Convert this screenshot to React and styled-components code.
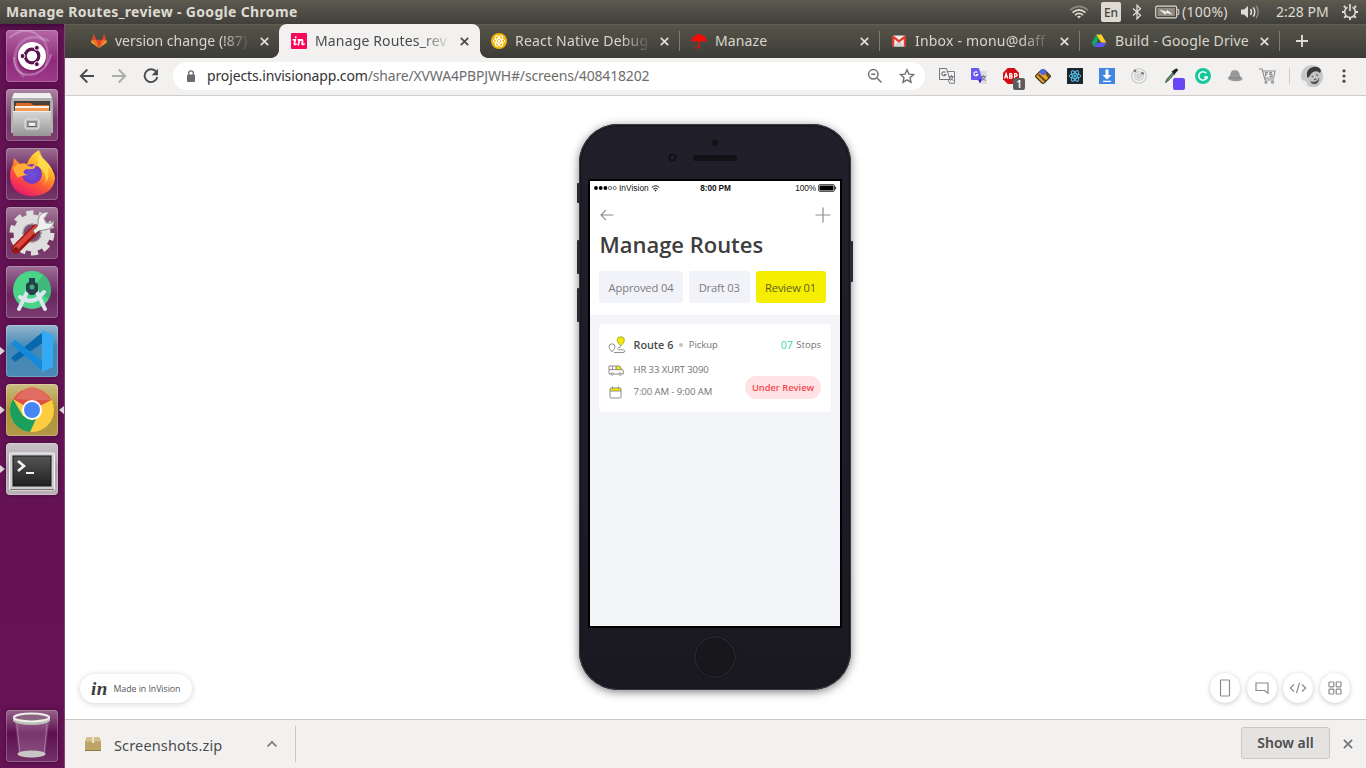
import React from 'react';
import styled, { createGlobalStyle } from 'styled-components';

const GlobalStyle = createGlobalStyle`
  * { box-sizing: border-box; }
  html, body, #root { margin: 0; width: 1366px; height: 768px; overflow: hidden; }
  body { font-family: "Noto Sans", "Open Sans", sans-serif; background: #fff; }
  svg { display: block; flex: none; }
`;

const Desktop = styled.div`
  display: flex;
  flex-direction: column;
  width: 1366px;
  height: 768px;
`;

const Label = styled.span`
  flex: none;
  width: ${p => (p.$w ? `${p.$w}px` : 'auto')};
  font-size: ${p => p.$size || 14}px;
  font-weight: ${p => p.$weight || 400};
  letter-spacing: ${p => p.$ls || 0}px;
  color: ${p => p.$color || 'inherit'};
  white-space: nowrap;
`;

/* ---------- system panel ---------- */

const Panel = styled.header`
  display: flex;
  align-items: center;
  height: 24px;
  padding: 0 8px 0 6px;
  background: linear-gradient(#5e5b4d 0, #5a574e 2px, #403f3a 24px);
  color: #dfdbd2;
  line-height: 24px;
`;
const Indicators = styled.div`
  display: flex;
  align-items: center;
  height: 24px;
  margin-left: auto;
`;
const Slot = styled.div`
  display: flex;
  align-items: center;
  width: ${p => p.$w}px;
  height: 24px;
`;
const LangBox = styled.div`
  width: 20px;
  height: 20px;
  border-radius: 2px;
  background: #dfdbd2;
  color: #45443f;
  font-size: 12px;
  font-weight: 500;
  line-height: 21px;
  text-align: center;
`;

/* ---------- launcher ---------- */

const Body = styled.div`
  display: flex;
  flex: 1;
  min-height: 0;
`;
const Launcher = styled.nav`
  display: flex;
  flex-direction: column;
  flex: none;
  gap: 7px;
  width: 65px;
  padding: 6px 0;
  background: linear-gradient(#43093a 0, #641254 6px, #651355 100%);
  border-right: 1px solid #824474;
`;
const LauncherRow = styled.div`
  display: grid;
  grid-template-columns: 6px 52px 6px;
  align-items: center;
  height: 52px;
  margin-top: ${p => (p.$last ? 'auto' : 0)};
`;
const Tile = styled.div`
  width: 52px;
  height: 52px;
  border-radius: 4px;
  overflow: hidden;
  background: ${p => p.$bg};
  box-shadow: inset 0 0 0 1px rgba(255, 255, 255, 0.22), 0 0 4px rgba(30, 0, 25, 0.5);
`;
const RunMark = styled.span`
  width: 0;
  height: 0;
  border-top: 4px solid transparent;
  border-bottom: 4px solid transparent;
  border-left: ${p => (p.$right ? '0' : '5px solid #dcd5d9')};
  border-right: ${p => (p.$right ? '5px solid #dcd5d9' : '0')};
  visibility: ${p => (p.$on ? 'visible' : 'hidden')};
  justify-self: ${p => (p.$right ? 'end' : 'start')};
`;

/* ---------- browser ---------- */

const Browser = styled.main`
  display: flex;
  flex-direction: column;
  flex: 1;
  min-width: 0;
`;
const TabStrip = styled.div`
  display: flex;
  height: 34px;
  padding-left: 14px;
  background: linear-gradient(#6b6953 0, #55554a 1px, #3c3b37 34px);
`;
const Tab = styled.div`
  position: relative;
  display: flex;
  align-items: center;
  flex: none;
  width: ${p => (p.$active ? 201 : 200)}px;
  height: 34px;
  margin: ${p => (p.$active ? '0 -1px 0 0' : 0)};
  padding: 0 0 0 12px;
  color: ${p => (p.$active ? '#4c4c4c' : '#d8d5cc')};
  background: ${p => (p.$active ? '#f2f1f0' : 'none')};
  border-radius: ${p => (p.$active ? '8px 8px 0 0' : 0)};
  &::before, &::after {
    content: "";
    display: ${p => (p.$active ? 'block' : 'none')};
    position: absolute;
    bottom: 0;
    width: 8px;
    height: 8px;
  }
  &::before { left: -8px; background: radial-gradient(circle at 0 0, transparent 7.5px, #f2f1f0 8.2px); }
  &::after { right: -8px; background: radial-gradient(circle at 100% 0, transparent 7.5px, #f2f1f0 8.2px); }
`;
const TabTitle = styled.span`
  flex: none;
  width: 140px;
  margin-left: 8px;
  white-space: nowrap;
  font-size: 14px;
  letter-spacing: ${p => p.$ls || 0}px;
  line-height: 34px;
  mask-image: ${p => (p.$fade ? 'linear-gradient(90deg, #000 106px, transparent 137px)' : 'none')};
`;
const TabClose = styled.span`
  display: flex;
  flex: none;
  justify-content: center;
  width: 18px;
`;
const Divider = styled.span`
  flex: none;
  width: 1px;
  height: ${p => p.$h}px;
  margin: ${p => p.$m || 0};
  background: ${p => p.$color};
`;
const NewTab = styled.div`
  width: 44px;
  height: 34px;
`;

const Toolbar = styled.div`
  display: flex;
  align-items: center;
  height: 38px;
  padding: 0 20px 1px 14px;
  background: #f2f1f0;
  border-bottom: 1px solid #cfcecc;
`;
const NavButtons = styled.div`
  display: flex;
  gap: 16px;
  width: 94px;
`;
const Omnibox = styled.div`
  display: flex;
  align-items: center;
  width: 752px;
  height: 28px;
  padding: 0 10px 0 13px;
  border-radius: 14px;
  background: #fff;
`;
const Url = styled.div`
  flex: 1;
  margin-left: 11px;
  color: #6d6d6d;
  font-size: 14px;
  line-height: 28px;
  white-space: nowrap;
`;
const Extensions = styled.div`
  display: flex;
  align-items: center;
  gap: 16px;
  margin-left: 14px;
`;
const ExtSlot = styled.div`
  position: relative;
  width: 16px;
  height: 16px;
`;
const Badge = styled.span`
  position: absolute;
  left: 10px;
  top: 10px;
  width: 12px;
  height: 12px;
  border-radius: 2px;
  background: ${p => p.$bg};
  color: #fff;
  font-size: 10px;
  font-weight: 600;
  line-height: 12px;
  text-align: center;
`;
const MenuDots = styled.svg`
  margin-left: auto;
`;

/* ---------- page ---------- */

const Page = styled.section`
  display: grid;
  grid-template-columns: 1fr 272px 1fr;
  flex: 1;
  padding: 28px 16px 16px 15px;
  background: #fff;
`;
const MadePill = styled.div`
  display: flex;
  align-items: center;
  align-self: end;
  width: 112px;
  height: 29px;
  padding-left: 11px;
  border-radius: 15px;
  background: #fff;
  box-shadow: 0 1px 6px rgba(0, 0, 0, 0.18);
  color: #555;
  font-family: "Open Sans", sans-serif;
`;
const InMark = styled.span`
  width: 22.5px;
  color: #3c3c3c;
  font: italic 700 19px/24px "Liberation Serif", serif;
  letter-spacing: 0.5px;
`;
const RoundButtons = styled.div`
  display: flex;
  align-self: end;
  justify-self: end;
  gap: 6.7px;
`;
const RoundButton = styled.button`
  display: grid;
  place-items: center;
  width: 30px;
  height: 30px;
  padding: 0;
  border: 0;
  border-radius: 50%;
  background: #fff;
  box-shadow: 0 1px 5px rgba(0, 0, 0, 0.22);
`;

/* ---------- phone ---------- */

const Phone = styled.div`
  position: relative;
  display: flex;
  flex-direction: column;
  align-items: center;
  width: 272px;
  height: 566px;
  border-radius: 39px;
  background: linear-gradient(#211f29, #1a1821);
  box-shadow: inset 0 0 0 1px #3b3945, inset 0 0 0 2.5px #17161d, 0 2px 10px rgba(0, 0, 0, 0.5);
`;
const SideKey = styled.span`
  position: absolute;
  top: ${p => p.$top}px;
  ${p => (p.$right ? 'right: -2px;' : 'left: -2px;')}
  width: 3px;
  height: ${p => p.$h}px;
  border-radius: 1px;
  background: #2a2933;
`;
const Forehead = styled.div`
  height: 55px;
`;
const Screen = styled.div`
  width: 254px;
  height: 449px;
  border: 2px solid #000;
  background: #f4f5f8;
  font-family: "Open Sans", sans-serif;
`;
const Chin = styled.div`
  display: grid;
  place-items: center;
  height: 58px;
`;
const HomeButton = styled.div`
  width: 42px;
  height: 42px;
  border: 2px solid #24232a;
  border-radius: 50%;
  background: #17171c;
  box-shadow: 0 0 0 0.5px #121117, inset 0 0 0 0.5px #101014;
`;
const AppHeader = styled.div`
  height: 134px;
  background: #fff;
`;
const StatusBar = styled.div`
  display: grid;
  grid-template-columns: 1fr auto 1fr;
  align-items: center;
  height: 14px;
  padding: 0 3px 0 4px;
  color: #111;
  font: 8.3px/14px "Liberation Sans", sans-serif;
`;
const StatusGroup = styled.div`
  display: flex;
  align-items: center;
  justify-self: ${p => (p.$end ? 'end' : 'start')};
  gap: 2px;
`;
const AppNav = styled.div`
  display: flex;
  align-items: center;
  justify-content: space-between;
  height: 40px;
  padding: 0 9px 0 10px;
`;
const Title = styled.h1`
  margin: -1px 0 0 9.5px;
  height: 21px;
  color: #3d3d3d;
  font-size: 22px;
  font-weight: 550;
  line-height: 20px;
  letter-spacing: -0.02px;
`;
const Chips = styled.div`
  display: flex;
  gap: 6px;
  margin: 16px 0 0 9px;
`;
const Chip = styled.div`
  width: ${p => p.$w}px;
  height: 32px;
  border-radius: 3px;
  background: ${p => (p.$on ? '#f5ee00' : '#f2f3f8')};
  color: ${p => (p.$on ? '#5f5d25' : '#7c7c7e')};
  font-size: 11.2px;
  letter-spacing: -0.15px;
  line-height: 33px;
  text-align: center;
`;
const Card = styled.div`
  display: flex;
  justify-content: space-between;
  width: 232px;
  height: 88px;
  margin: 9px 0 0 9px;
  padding: 10px 10px 0 9px;
  border-radius: 4px;
  background: #fff;
`;
const CardInfo = styled.div`
  display: flex;
  flex-direction: column;
`;
const InfoRow = styled.div`
  display: flex;
  align-items: center;
  height: ${p => p.$h}px;
  & > span { margin-top: -1px; }
`;
const IconSlot = styled.div`
  width: 25.5px;
`;
const Dot = styled.i`
  width: 4px;
  height: 4px;
  margin: 0 5.5px 0 6px;
  border-radius: 50%;
  background: #c4c4c4;
`;
const CardSide = styled.div`
  display: flex;
  flex-direction: column;
  align-items: flex-end;
`;
const ReviewPill = styled.div`
  width: 76px;
  height: 23px;
  margin-top: 20px;
  border-radius: 12px;
  background: #ffe3e4;
  color: #f8474d;
  font-size: 9.3px;
  font-weight: 600;
  line-height: 23px;
  text-align: center;
`;

/* ---------- downloads ---------- */

const DownloadBar = styled.footer`
  display: flex;
  align-items: center;
  height: 49px;
  padding: 0 13px 0 20px;
  border-top: 1px solid #c9c8c7;
  background: #f2f1f0;
  color: #4c4c4c;
`;
const DownloadItem = styled.div`
  display: flex;
  align-items: center;
  gap: 13px;
  width: 210px;
  padding-right: 18px;
`;
const FileName = styled(Label)`
  margin-top: 2px;
`;
const ShowAll = styled.button`
  width: 89px;
  height: 32px;
  margin: -2px 13px 0 auto;
  padding: 0;
  border: 1px solid #c9c8c6;
  border-radius: 3px;
  background: #e4e3e1;
  color: #4c4c4c;
  font: 600 14px/28px "Noto Sans", sans-serif;
`;

/* ---------- drawings ---------- */

const Cross = ({ color, size = 9, width = 1.8 }) => (
  <svg width={size} height={size} viewBox="0 0 9 9" stroke={color} strokeWidth={width}>
    <path d="M.8.8l7.4 7.4M8.2.8L.8 8.2" />
  </svg>
);

const GitlabIcon = () => (
  <svg width="16" height="16" viewBox="0 0 16 16">
    <path d="M2.8.8L.8 6.7h4.4zM13.2.8l2 5.9h-4.4z" fill="#e24329" />
    <path d="M5.2 6.7h5.6L8 15.3z" fill="#e24329" />
    <path d="M.8 6.7h4.4L8 15.3zM15.2 6.7h-4.4L8 15.3z" fill="#fc6d26" />
    <path d="M.8 6.7L0 9.2l8 6.1zM15.2 6.7l.8 2.5-8 6.1z" fill="#fca326" />
  </svg>
);
const InvisionIcon = () => (
  <svg width="16" height="16" viewBox="0 0 16 16">
    <rect width="16" height="16" rx="1" fill="#f9075a" />
    <g fill="none" stroke="#fff" strokeWidth="1.7" strokeLinecap="round">
      <path d="M2.3 6.8h2L3.4 10.400q-.3 1.600 1.600.8M7.300 6.800h1.200l-1.200 5M8.200 8.300q1-1.600 2.400-1.500 1.300.2.900 1.900l-.4 2q-.1 1.300 1.900.4" />
    </g>
    <circle cx="4.700" cy="4.300" r="1" fill="#fff" />
  </svg>
);
const Atom = ({ color, size = 16, bg, round, width = 1 }) => (
  <svg width={size} height={size} viewBox="0 0 16 16">
    {bg && <rect width="16" height="16" rx={round ? 8 : 0.5} fill={bg} />}
    <g fill="none" stroke={color} strokeWidth={width}>
      <ellipse cx="8" cy="8" rx="5.800" ry="2.300" />
      <ellipse cx="8" cy="8" rx="5.800" ry="2.300" transform="rotate(60 8 8)" />
      <ellipse cx="8" cy="8" rx="5.800" ry="2.300" transform="rotate(120 8 8)" />
    </g>
    <circle cx="8" cy="8" r="1.200" fill={color} />
  </svg>
);
const UmbrellaIcon = () => (
  <svg width="16" height="16" viewBox="0 0 16 16">
    <path d="M0 9Q.6 2.200 7.200 1.400V.3h1.600v1.100Q15.400 2.200 16 9q-1.400-1-2.700-.6-1.300-.6-2.600.3-1.300-.9-2.700-.3-1.300-.6-2.700.3-1.300-.9-2.600-.3Q1.400 8 0 9z" fill="#f30b05" />
    <path d="M8.200 8v5.600a1.600 1.600 0 0 1-3.200 0" fill="none" stroke="#f30b05" strokeWidth="1.300" />
  </svg>
);
const GmailIcon = () => (
  <svg width="16" height="16" viewBox="0 0 16 16">
    <path d="M2 2.500h12v11H2z" fill="#eceaea" />
    <path d="M3 13.500l4-5 1 .8 1-.8 4 5z" fill="#d4d2d2" />
    <path d="M1 13.500v-10q0-1.400 1.400-1L8 7l5.600-4.500q1.400-.4 1.400 1v10h-2.200V6L8 9.800 3.200 6v7.500z" fill="#e03c2c" />
  </svg>
);
const DriveIcon = () => (
  <svg width="16" height="16" viewBox="0 0 16 16">
    <path d="M5.300 1.500L.7 9.800l2.400 4.300L8 5.800z" fill="#11a861" />
    <path d="M5.300 1.500h5.200l4.800 8.300h-5z" fill="#ffd024" />
    <path d="M5.600 9.800h9.700l-2.500 4.300H3.100z" fill="#5a55ee" />
  </svg>
);

const WifiIcon = () => (
  <svg width="20" height="14" viewBox="0 0 20 14" fill="none" strokeWidth="1.600">
    <path d="M1 5.200Q10-2.600 19 5.200" stroke="#8b887f" />
    <path d="M3.500 7.700Q10 2 16.500 7.700M6 10.100q4-3.400 8 0" stroke="#dfdbd2" />
    <path d="M8 11.400q2-1.300 4 0L10 13.600z" fill="#dfdbd2" />
  </svg>
);
const BluetoothIcon = () => (
  <svg width="10" height="16" viewBox="0 0 10 16" fill="none" stroke="#dfdbd2" strokeWidth="1.300">
    <path d="M1 4.500l7.500 6.800L5 14.800V1.200l3.500 3.500L1 11.500" />
  </svg>
);
const BatteryIcon = () => (
  <svg width="25" height="14" viewBox="0 0 25 14">
    <rect x=".7" y="1.200" width="21" height="11.600" rx="1.500" fill="none" stroke="#dfdbd2" strokeWidth="1.200" />
    <rect x="2.500" y="3" width="17.400" height="8" fill="#8d8a82" />
    <path d="M22.300 4.500h1.500v5h-1.500" fill="none" stroke="#dfdbd2" />
    <path d="M4 4.200l7.500 2.500.5-2 6 5-7-1.600-.6 1.900z" fill="#f1eee6" />
  </svg>
);
const SpeakerIcon = () => (
  <svg width="20" height="16" viewBox="0 0 20 16" fill="none" strokeWidth="1.500">
    <path d="M1 5.500h3L8 2v12l-4-3.500H1z" fill="#dfdbd2" />
    <path d="M10.500 5q2 3 0 6M13.200 3.300q3.200 4.700 0 9.400" stroke="#dfdbd2" />
    <path d="M16 1.800q4.400 6.200 0 12.400" stroke="#8b887f" />
  </svg>
);
const PowerGear = () => (
  <svg width="16" height="16" viewBox="0 0 16 16" fill="none" stroke="#dfdbd2">
    <path d="M5.500 3.300a5.400 5.400 0 1 0 5 0" strokeWidth="1.600" />
    <path d="M8 0v7" strokeWidth="1.700" />
    <path d="M3.600 3.600L1.900 1.900M12.400 3.600l1.700-1.700M2.600 8H0M13.400 8H16M4 12l-1.800 1.800M12 12l1.800 1.800M8 13.500V16" strokeWidth="2" />
  </svg>
);

const UbuntuArt = () => (
  <svg width="52" height="52" viewBox="0 0 52 52">
    <g fill="none" stroke="#fff">
      <path d="M3 8Q22-8 38 11q7 12 1 25" strokeOpacity=".24" strokeWidth="2" />
      <path d="M8 27Q8 48 29 44q13-5 16-20" strokeOpacity=".3" strokeWidth="2" />
      <path d="M18 47Q3 31 13 15 23 2 43 11" strokeOpacity=".2" strokeWidth="3" />
    </g>
    <circle cx="26" cy="27" r="14.500" fill="#4b0b42" opacity=".35" />
    <circle cx="26" cy="26" r="14" fill="#fff" />
    <circle cx="26" cy="26" r="6.800" fill="none" stroke="#5c1350" strokeWidth="3.200" />
    <g stroke="#fff" strokeWidth="1" fill="#5c1350">
      <circle cx="16.500" cy="26" r="2.500" />
      <circle cx="30.800" cy="17.800" r="2.500" />
      <circle cx="30.800" cy="34.200" r="2.500" />
    </g>
  </svg>
);
const FilesArt = () => (
  <svg width="52" height="52" viewBox="0 0 52 52">
    <defs>
      <linearGradient id="cab" x2="0" y2="1"><stop stopColor="#d8d8d8" /><stop offset="1" stopColor="#969696" /></linearGradient>
    </defs>
    <path d="M8 4h36l3 8v32H5V12z" fill="#b0b0b0" />
    <path d="M8 4h36l2 5H6z" fill="#efefef" />
    <rect x="8" y="12" width="36" height="12" fill="#45403c" />
    <path d="M10 14h15l2 2h16v7H9z" fill="#d96926" />
    <path d="M9 17h34v2H9z" fill="#faf2e8" />
    <path d="M9 19h34v3H9z" fill="#f09a54" />
    <rect x="7" y="22" width="38" height="25" rx="1" fill="url(#cab)" />
    <path d="M7 22.500h38" stroke="#eee" />
    <rect x="19" y="30" width="14" height="10" rx="2" fill="#bbb" stroke="#e6e6e6" />
    <rect x="22" y="33" width="8" height="4.500" fill="#ececec" stroke="#555" />
  </svg>
);
const FirefoxArt = () => (
  <svg width="52" height="52" viewBox="0 0 52 52">
    <defs>
      <linearGradient id="ff" x1=".8" y1="0" x2=".25" y2="1">
        <stop stopColor="#fff04f" /><stop offset=".38" stopColor="#ffa928" /><stop offset=".65" stopColor="#fb5639" /><stop offset="1" stopColor="#ec1470" />
      </linearGradient>
      <radialGradient id="ffg"><stop stopColor="#6a55d8" /><stop offset="1" stopColor="#7438c8" /></radialGradient>
    </defs>
    <path d="M7 16l1-6 6 6 4-1 3 1q3-9 12-14 0 6 6 11 9 8 10 17-2 17-22 18Q6 48 4 29q0-8 3-13z" fill="url(#ff)" />
    <circle cx="26" cy="26" r="10" fill="url(#ffg)" />
    <path d="M7 20q4-5 10-4l9 3q4-3 5-7 6 6 10 14 1 9-6 14 9-9 2-18-3-4-8-4 1 4-9 3-6 4 2 6-9 1-10 3-4-6-5-10z" fill="#ffad36" />
    <path d="M31 12q2-6 3-10 0 6 6 11 5 5 7 12-2-5-5-5 2 9-2 14 1-10-9-17 2-2 0-5z" fill="#ffe24c" opacity=".8" />
  </svg>
);
const SettingsArt = () => (
  <svg width="52" height="52" viewBox="0 0 52 52">
    <circle cx="26" cy="26" r="14" fill="none" stroke="#dedede" strokeWidth="9" />
    <circle cx="26" cy="26" r="19.500" fill="none" stroke="#dedede" strokeWidth="6" strokeDasharray="7 5.250" />
    <circle cx="26" cy="26" r="9" fill="#7d4d72" stroke="#aaa" />
    <path d="M10 42l20-20" stroke="#9e120e" strokeWidth="9" strokeLinecap="round" />
    <path d="M10 41l20-20" stroke="#da463e" strokeWidth="5" strokeLinecap="round" />
    <path d="M27 23q6-2 5-10 2-9 11-8l-5 6 2 5 6 0 2-4q1 10-10 11-6 0-9 4z" fill="#efefef" stroke="#777" strokeWidth=".8" />
    <circle cx="10" cy="42" r="1.800" fill="#6b1010" />
  </svg>
);
const StudioArt = () => (
  <svg width="52" height="52" viewBox="0 0 52 52">
    <circle cx="26" cy="24" r="19" fill="#49d488" />
    <path d="M26 24l11-15a19 19 0 0 1 6 24z" fill="#3aa574" opacity=".6" />
    <g stroke="#dce6ee" strokeWidth="4" fill="none" strokeLinecap="round">
      <path d="M22 24l-9 19M30 24l9 19" />
      <path d="M14 31q13 9 22-3l2-2" />
    </g>
    <path d="M23 12h6v4l3 2v7l-4 4h-4l-4-4v-7l3-2z" fill="#24414e" />
    <circle cx="26" cy="21" r="2.500" fill="#42ae77" />
  </svg>
);
const CodeArt = () => (
  <svg width="52" height="52" viewBox="0 0 52 52">
    <path d="M5 33l4 4 29-20V6z" fill="#0868ad" />
    <path d="M5 19l4-4 28 21v10z" fill="#168ada" />
    <path d="M36 5l11 5v32l-11 5z" fill="#34a9f4" />
  </svg>
);
const ChromeArt = () => (
  <svg width="52" height="52" viewBox="0 0 52 52">
    <circle cx="26" cy="26" r="22" fill="#fdcd40" />
    <path d="M26 26L7 15a22 22 0 0 1 38.500 1z" fill="#dd5045" />
    <path d="M7 15l10 17 9 4 4-1-6 13A22 22 0 0 1 7 15z" fill="#1aa05c" />
    <path d="M9 15q17-24 36 1H26z" fill="#e06c62" />
    <circle cx="26" cy="26" r="10" fill="#fff" />
    <circle cx="26" cy="26" r="8" fill="#4586f2" />
  </svg>
);
const TerminalArt = () => (
  <svg width="52" height="52" viewBox="0 0 52 52">
    <defs><linearGradient id="term" x2="0" y2="1"><stop stopColor="#555" /><stop offset="1" stopColor="#202020" /></linearGradient></defs>
    <rect x="3.500" y="10" width="45" height="37" rx="1" fill="#cecece" stroke="#f3f3f3" />
    <path d="M4 46.500h44" stroke="#777" />
    <rect x="7" y="13" width="38" height="30" fill="url(#term)" stroke="#181818" />
    <path d="M12 18l6 5-6 5" fill="none" stroke="#f2f2f2" strokeWidth="2.600" />
    <path d="M20 30h8" stroke="#f2f2f2" strokeWidth="2" />
  </svg>
);
const TrashArt = () => (
  <svg width="52" height="52" viewBox="0 0 52 52">
    <path d="M9 12h34l-4 33q-13 5-26 0z" fill="#fff" opacity=".17" />
    <path d="M11 14l3 30M41 14l-3 30" stroke="#c49abb" opacity=".6" />
    <ellipse cx="25.500" cy="44" rx="14" ry="3.500" fill="#c9c5c7" />
    <path d="M7 7q0-4 18.500-4T44 7v4q-4 4-18.500 4T7 11z" fill="#bdbdb8" />
    <ellipse cx="25.500" cy="7.500" rx="17.500" ry="4" fill="#8a6683" stroke="#eeeeea" strokeWidth="2" />
  </svg>
);

const apps = [
  { Art: UbuntuArt, bg: 'linear-gradient(#b468a5, #8f2a7c 60%, #9d3b8a)' },
  { Art: FilesArt, bg: 'linear-gradient(#ac84a4, #753567 60%, #7d3f70)' },
  { Art: FirefoxArt, bg: 'linear-gradient(#9c6f93, #661b59 50%, #75366a)' },
  { Art: SettingsArt, bg: 'linear-gradient(#a67c9e, #72305f 55%, #7a3c70)' },
  { Art: StudioArt, bg: 'linear-gradient(#9d7095, #6a2560 55%, #7a3c70)' },
  { Art: CodeArt, bg: 'linear-gradient(#94b7cf, #4487b4 42%, #4b89b6)', left: true },
  { Art: ChromeArt, bg: 'linear-gradient(#cdbd83, #ae9136 50%, #b39a49)', left: true, right: true },
  { Art: TerminalArt, bg: 'linear-gradient(#c9c2c7, #ada2aa 50%, #bab0b7)', left: true },
];

const TranslateIcon = ({ on }) => (
  <svg width="16" height="16" viewBox="0 0 16 16">
    <path d="M5.500 3.500h10v11.800h-5z" fill={on ? '#dcdde3' : '#f2f1f0'} stroke={on ? '#dcdde3' : '#7b8288'} />
    <path d="M.5.500h7l3.500 11H.5z" fill={on ? '#675af2' : '#f2f1f0'} stroke={on ? '#675af2' : '#6e767c'} />
    <path d="M6.500 4.500a2 2 0 1 0 .3 2H5" fill="none" stroke={on ? '#fff' : '#6e767c'} strokeWidth="1.200" />
    <path d="M10 8.500h5M12.500 7v1.500M14 8.500q-.5 3-3 4M11 9q1 2.500 3.500 3.500" fill="none" stroke="#6f7d8a" />
    {on && <path d="M7 11.500h4L9 15.500z" fill="#4b10c2" />}
  </svg>
);
const AdblockIcon = () => (
  <svg width="16" height="16" viewBox="0 0 16 16">
    <path d="M4.700 0h6.600L16 4.700v6.600L11.300 16H4.700L0 11.300V4.700z" fill="#d40d12" />
    <g fill="none" stroke="#fff" strokeWidth="1.200">
      <path d="M1.500 10.500l1.600-5 1.700 5M2.200 9h2M6.700 5.700h1.600q1.400 1.100 0 2.200H6.700q3.700-.3 2 2.200h-2zM11.600 10.500V5.700h1.700q1.800 1.300 0 2.600h-1.700" />
    </g>
  </svg>
);
const BeeIcon = () => (
  <svg width="16" height="16" viewBox="0 0 16 16">
    <path d="M8 2Q9 1.500 11 3.500l4 4q.8.800 0 1.600L9 15q-1 .8-2 0L1 9q-.8-.8 0-1.600l4-4Q7 1.500 8 2z" fill="#eda421" stroke="#3c3427" strokeWidth="1.200" />
    <path d="M3.500 6.500l7.500 7.200M11 5.500l3 4" stroke="#483b26" strokeWidth="1.600" />
    <circle cx="8" cy="4" r="2.900" fill="#4b67e6" />
  </svg>
);
const DownloadIcon = () => (
  <svg width="16" height="16" viewBox="0 0 16 16">
    <rect width="16" height="16" fill="#4286e3" />
    <path d="M6.500 1.500h3V7h3L8 11.500 3.500 7h3zM4 12.800h8V14H4z" fill="#fff" />
  </svg>
);
const OrbitIcon = () => (
  <svg width="16" height="16" viewBox="0 0 16 16" fill="none" stroke="#c5c5c5" strokeWidth="1.100">
    <circle cx="8" cy="8" r="7.300" /><circle cx="8" cy="8" r="4.300" /><circle cx="8" cy="8" r="2" fill="#ddd" />
    <circle cx="4" cy="2.800" r="1.400" fill="#777" stroke="none" /><circle cx="11.500" cy="5.300" r="1.400" fill="#777" stroke="none" />
  </svg>
);
const PickerIcon = () => (
  <svg width="16" height="16" viewBox="0 0 16 16">
    <path d="M2.500 14.500l1-3L9.500 4.800l1.500 1.500-6 6.700z" fill="#5c9473" stroke="#33493c" strokeWidth=".8" />
    <path d="M8.500 3.500l1-.5L12 1q2-1.300 2.800.2.500 1.300-.8 2.300l-2 2.300-.5 1.300z" fill="#242424" />
  </svg>
);
const GrammarIcon = () => (
  <svg width="16" height="16" viewBox="0 0 16 16">
    <circle cx="8" cy="8" r="8" fill="#15c899" />
    <path d="M11.200 5.200A4.200 4.200 0 1 0 12 9.200H9" fill="none" stroke="#fff" strokeWidth="1.500" />
    <path d="M10 8.500h3v2h-1.500z" fill="#fff" />
  </svg>
);
const HatIcon = () => (
  <svg width="16" height="16" viewBox="0 0 16 16">
    <path d="M3 8Q3.500 1.500 8 2.300q4.300-.5 5 5.700l2.300 2q1 2.500-3.300 3-5 1-9.500-1-3.300-1.500 0-4z" fill="#999" />
    <path d="M2.500 9q5 2.500 11 .5" stroke="#828282" fill="none" />
  </svg>
);
const CartIcon = () => (
  <svg width="17" height="16" viewBox="0 0 17 16" fill="none" stroke="#8c8c8c" strokeWidth="1.100">
    <path d="M0 1h3l3 11h9M3.500 3H16l-1.500 7H5.500" />
    <path d="M6.500 8.500v-4H9M6.500 6.300h2M13 4.600h-2.200v1.800H13v2h-2.500" />
    <circle cx="7" cy="14.300" r="1" /><circle cx="13.500" cy="14.300" r="1" />
  </svg>
);
const Avatar = () => (
  <svg width="22" height="22" viewBox="0 0 22 22">
    <defs><clipPath id="face"><circle cx="11" cy="11" r="11" /></clipPath></defs>
    <g clipPath="url(#face)">
      <rect width="22" height="22" fill="#c9c9c9" />
      <path d="M13 22q8-3 9-9v9z" fill="#8d8d8d" />
      <ellipse cx="13.500" cy="11.500" rx="5.500" ry="7" transform="rotate(35 13 12)" fill="#c4c4c4" />
      <path d="M6 11Q5 4 12 2q7-1 8 4l-1 2q-3-3-7-1-3 2-4 5-2 2-2-1z" fill="#3a3a3a" />
      <path d="M9 16q4 2 8-1l1-3q1 5-3 7-4 1-6-3z" fill="#555" />
      <path d="M10.500 11l2 .8M15 9.500l2 1M13 14.500l2.500-.5" stroke="#444" />
      <path d="M0 16q4-2 6 2l1 4H0z" fill="#eee" />
    </g>
  </svg>
);

const tabs = [
  { title: 'version change (!87)', icon: <GitlabIcon />, fade: true },
  { title: 'Manage Routes_rev', icon: <InvisionIcon />, active: true, fade: true, ls: 0.15 },
  { title: 'React Native Debug', icon: <Atom color="#fff" bg="#f5b400" round />, fade: true, sep: true, ls: 0.2 },
  { title: 'Manaze', icon: <UmbrellaIcon />, sep: true, ls: 0.1 },
  { title: 'Inbox - monu@daff', icon: <GmailIcon />, fade: true, sep: true, ls: 0.2 },
  { title: 'Build - Google Drive', icon: <DriveIcon />, sep: true, ls: 0.15 },
];

function SystemPanel() {
  return (
    <Panel>
      <Label $size={14} $weight={700} $ls={0.33}>Manage Routes_review - Google Chrome</Label>
      <Indicators>
        <Slot $w={32}><WifiIcon /></Slot>
        <Slot $w={31}><LangBox>En</LangBox></Slot>
        <Slot $w={23}><BluetoothIcon /></Slot>
        <Slot $w={27}><BatteryIcon /></Slot>
        <Slot $w={58}><Label $ls={0.3}>(100%)</Label></Slot>
        <Slot $w={36}><SpeakerIcon /></Slot>
        <Slot $w={66}><Label>2:28 PM</Label></Slot>
        <PowerGear />
      </Indicators>
    </Panel>
  );
}

function AppLauncher() {
  return (
    <Launcher>
      {apps.map(({ Art, bg, left, right }, i) => (
        <LauncherRow key={i}>
          <RunMark $on={left} />
          <Tile $bg={bg}><Art /></Tile>
          <RunMark $right $on={right} />
        </LauncherRow>
      ))}
      <LauncherRow $last>
        <RunMark />
        <Tile $bg="linear-gradient(#94628b, #5f0f50 45%, #733167)"><TrashArt /></Tile>
      </LauncherRow>
    </Launcher>
  );
}

function Tabs() {
  return (
    <TabStrip>
      {tabs.map(t => (
        <Tab key={t.title} $active={t.active}>
          {t.icon}
          <TabTitle $fade={t.fade} $ls={t.ls}>{t.title}</TabTitle>
          <TabClose><Cross color={t.active ? '#4c4c4c' : '#dedbd2'} /></TabClose>
          {t.sep && <Divider $h={20} $color="#7d7c74" $m="0 0 0 6px" />}
        </Tab>
      ))}
      <NewTab>
        <svg width="44" height="34" viewBox="0 0 44 34" stroke="#dfdbd2" strokeWidth="1.900"><path d="M17 17h12M23 11v12" /></svg>
      </NewTab>
    </TabStrip>
  );
}

function BrowserToolbar() {
  return (
    <Toolbar>
      <NavButtons>
        <svg width="16" height="16" viewBox="0 0 16 16" fill="none" stroke="#4c4c4c" strokeWidth="1.900"><path d="M15 8H2M8.300 1.500L1.800 8l6.500 6.500" /></svg>
        <svg width="16" height="16" viewBox="0 0 16 16" fill="none" stroke="#acacab" strokeWidth="1.900"><path d="M1 8h13M7.700 1.500L14.200 8l-6.500 6.500" /></svg>
        <svg width="16" height="16" viewBox="0 0 16 16" fill="none" stroke="#4c4c4c" strokeWidth="1.900"><path d="M13.500 4.300A6.400 6.400 0 1 0 14.300 9" /><path d="M15 .8v6.400H8.600z" fill="#4c4c4c" stroke="none" /></svg>
      </NavButtons>
      <Omnibox>
        <svg width="10" height="13" viewBox="0 0 10 13"><rect x="1" y="4.500" width="8" height="7.500" rx="1" fill="#6b6b6b" /><path d="M2.700 5V3.200a2.300 2.300 0 0 1 4.600 0V5" fill="none" stroke="#6b6b6b" strokeWidth="1.300" /></svg>
        <Url><Label $color="#333" $ls={-0.13}>projects.invisionapp.com</Label><Label $ls={-0.17}>/share/XVWA4PBPJWH#/screens/408418202</Label></Url>
        <svg width="16" height="16" viewBox="0 0 16 16" fill="none" stroke="#707070" strokeWidth="1.500"><circle cx="6.300" cy="6.300" r="4.700" /><path d="M10 10l4.500 4.500M4.200 6.300h4.200" /></svg>
        <svg width="32" height="16" viewBox="-16 0 32 16" fill="none" stroke="#707070" strokeWidth="1.400"><path d="M8 1.800l1.900 4.300 4.600.5-3.500 3.100 1 4.600L8 11.900l-4 2.400 1-4.600-3.500-3.100 4.600-.5z" /></svg>
      </Omnibox>
      <Extensions>
        <ExtSlot><TranslateIcon /></ExtSlot>
        <ExtSlot><TranslateIcon on /></ExtSlot>
        <ExtSlot><AdblockIcon /><Badge $bg="#5c5c5c">1</Badge></ExtSlot>
        <ExtSlot><BeeIcon /></ExtSlot>
        <ExtSlot><Atom color="#4fc3e8" bg="#20242b" /></ExtSlot>
        <ExtSlot><DownloadIcon /></ExtSlot>
        <ExtSlot><OrbitIcon /></ExtSlot>
        <ExtSlot><PickerIcon /><Badge $bg="#6547f5" /></ExtSlot>
        <ExtSlot><GrammarIcon /></ExtSlot>
        <ExtSlot><HatIcon /></ExtSlot>
        <ExtSlot><CartIcon /></ExtSlot>
      </Extensions>
      <Divider $h={16} $color="#cfcecc" $m="0 11px 0 14px" />
      <Avatar />
      <MenuDots width="4" height="16" viewBox="0 0 4 16" fill="#4c4c4c"><circle cx="2" cy="2.800" r="1.600" /><circle cx="2" cy="8" r="1.600" /><circle cx="2" cy="13.200" r="1.600" /></MenuDots>
    </Toolbar>
  );
}

function PhoneScreen() {
  return (
    <Screen>
      <AppHeader>
        <StatusBar>
          <StatusGroup>
            <svg width="23" height="6" viewBox="0 0 23 6"><g fill="#000"><circle cx="2" cy="3" r="1.900" /><circle cx="6.700" cy="3" r="1.900" /><circle cx="11.400" cy="3" r="1.900" /></g><g fill="none" stroke="#333" strokeWidth=".7"><circle cx="16" cy="3" r="1.600" /><circle cx="20.700" cy="3" r="1.600" /></g></svg>
            <Label $size={8.3} $ls={0.05}>InVision</Label>
            <svg width="9" height="7" viewBox="0 0 9 7" fill="none" stroke="#111"><path d="M.7 2.500q3.800-3.300 7.600 0M2.200 4.200q2.300-2 4.600 0" /><path d="M3.300 5.200q1.200-.9 2.400 0L4.500 6.500z" fill="#111" stroke="none" /></svg>
          </StatusGroup>
          <Label $size={8.3} $weight={700} $ls={-0.15}>8:00 PM</Label>
          <StatusGroup $end>
            <Label $size={8.3} $ls={-0.1}>100%</Label>
            <svg width="19" height="8" viewBox="0 0 19 8"><rect x=".5" y=".5" width="16" height="7" rx="1.500" fill="none" stroke="#111" strokeWidth=".7" /><rect x="1.500" y="1.500" width="14" height="5" rx=".6" /><path d="M17.300 2.700q1.200 1.300 0 2.600z" stroke="#111" strokeWidth=".6" /></svg>
          </StatusGroup>
        </StatusBar>
        <AppNav>
          <svg width="14" height="12" viewBox="0 0 14 12" fill="none" stroke="#8a8a8a" strokeWidth="1.100"><path d="M13.500 6H1.200M6 .8L1 6l5 5.200" /></svg>
          <svg width="16" height="16" viewBox="0 0 16 16" stroke="#8e8e8e" strokeWidth="1.200"><path d="M.5 8h15M8 .5v15" /></svg>
        </AppNav>
        <Title>Manage Routes</Title>
        <Chips>
          <Chip $w={84}>Approved 04</Chip>
          <Chip $w={60.5}>Draft 03</Chip>
          <Chip $w={70} $on>Review 01</Chip>
        </Chips>
      </AppHeader>
      <Card>
        <CardInfo>
          <InfoRow $h={22}>
            <IconSlot>
              <svg width="18" height="18" viewBox="0 0 18 18" fill="none" stroke="#858585" strokeWidth=".9">
                <path d="M4 15.800Q1 12.500 1 10.800a3 3 0 0 1 6 0q0 1.700-3 5z" />
                <path d="M6 16.500h9q2.500-.3 1.500-2-.8-1-3.500-.8-3 .3-3.500-1.200 0-1.500 3.500-1.500" />
                <path d="M12.800 10Q9.200 6.500 9.200 4.300a3.600 3.600 0 0 1 7.200 0Q16.400 6.500 12.800 10z" fill="#f2ea0a" stroke="#a9a42c" />
              </svg>
            </IconSlot>
            <Label $size={10.8} $weight={600} $color="#4a4a4a">Route 6</Label>
            <Dot />
            <Label $size={9.5} $ls={-0.05} $color="#747474">Pickup</Label>
          </InfoRow>
          <InfoRow $h={28}>
            <IconSlot>
              <svg width="16" height="11" viewBox="0 0 16 11" fill="none" stroke="#858585" strokeWidth=".9">
                <path d="M8 1h3.500l2 3v1H8z" fill="#f2ea0a" stroke="none" />
                <path d="M3 9H1V1h10.500l2.500 3.800 1.300.7V9h-1.800M5.500 9h5.500M1 4.700h13M4.500 1v3.700M8 1v3.700" />
                <circle cx="4.200" cy="9" r="1.200" /><circle cx="12.200" cy="9" r="1.200" />
              </svg>
            </IconSlot>
            <Label $size={9.6} $ls={-0.13} $color="#747474">HR 33 XURT 3090</Label>
          </InfoRow>
          <InfoRow $h={16}>
            <IconSlot>
              <svg width="14" height="13" viewBox="-1 0 14 13" fill="none" stroke="#858585" strokeWidth=".9">
                <path d="M1 2h11v3H1z" fill="#f2ea0a" stroke="none" />
                <rect x="1" y="2" width="11" height="10" rx=".8" /><path d="M1 5h11M3.500.5v2M9.500.5v2" />
              </svg>
            </IconSlot>
            <Label $size={9.6} $ls={-0.1} $color="#747474">7:00 AM - 9:00 AM</Label>
          </InfoRow>
        </CardInfo>
        <CardSide>
          <InfoRow $h={22}>
            <Label $w={15.5} $size={10.5} $weight={500} $color="#2edaa3">07</Label>
            <Label $size={9.5} $color="#747474">Stops</Label>
          </InfoRow>
          <ReviewPill>Under Review</ReviewPill>
        </CardSide>
      </Card>
    </Screen>
  );
}

function PhoneFrame() {
  return (
    <Phone>
      <SideKey $top={59} $h={20} />
      <SideKey $top={116} $h={34} />
      <SideKey $top={164} $h={34} />
      <SideKey $right $top={117} $h={41} />
      <Forehead>
        <svg width="100" height="55" viewBox="0 0 100 55">
          <circle cx="50" cy="18.500" r="3.300" fill="#131217" />
          <circle cx="7.500" cy="33.500" r="4" fill="#111117" /><circle cx="7.500" cy="33.500" r="2" fill="#202431" />
          <rect x="28" y="31" width="44" height="6" rx="3" fill="#121116" />
        </svg>
      </Forehead>
      <PhoneScreen />
      <Chin><HomeButton /></Chin>
    </Phone>
  );
}

const line = { fill: 'none', stroke: '#8a8a8a', strokeWidth: 1.2 };

export default function App() {
  return (
    <Desktop>
      <GlobalStyle />
      <SystemPanel />
      <Body>
        <AppLauncher />
        <Browser>
          <Tabs />
          <BrowserToolbar />
          <Page>
            <MadePill>
              <InMark>in</InMark>
              <Label $size={8.8} $ls={-0.05}>Made in InVision</Label>
            </MadePill>
            <PhoneFrame />
            <RoundButtons>
              <RoundButton><svg width="12" height="18" viewBox="0 0 12 18" {...line}><rect x="1.500" y="1" width="9" height="16" rx=".5" /></svg></RoundButton>
              <RoundButton><svg width="14" height="12" viewBox="0 0 14 12" {...line}><path d="M1 1h12v10.200L9.800 8.500H1z" /></svg></RoundButton>
              <RoundButton><svg width="18" height="12" viewBox="0 0 18 12" {...line}><path d="M5 2.500L1.300 6 5 9.500M13 2.500L16.700 6 13 9.500M10.500.8l-3 10.400" /></svg></RoundButton>
              <RoundButton><svg width="14" height="14" viewBox="0 0 14 14" {...line}><rect x="1" y="1" width="4.800" height="4.800" rx=".8" /><rect x="8.200" y="1" width="4.800" height="4.800" rx=".8" /><rect x="1" y="8.200" width="4.800" height="4.800" rx=".8" /><rect x="8.200" y="8.200" width="4.800" height="4.800" rx=".8" /></svg></RoundButton>
            </RoundButtons>
          </Page>
          <DownloadBar>
            <DownloadItem>
              <svg width="16" height="16" viewBox="0 0 16 16"><path d="M1.500 1h13L16 5v9.500H0V5z" fill="#d4c08e" /><path d="M0 5.500h16v9H0z" fill="#bda468" /><path d="M0 14.500h16" stroke="#917b45" /><path d="M7 1h2v6H7z" fill="#eee5c8" /></svg>
              <FileName $w={139} $size={14.5} $ls={0.15}>Screenshots.zip</FileName>
              <svg width="12" height="8" viewBox="0 0 12 8" fill="none" stroke="#777" strokeWidth="1.700"><path d="M1.500 6.500L6 2l4.500 4.500" /></svg>
            </DownloadItem>
            <Divider $h={36} $color="#c9c8c7" />
            <ShowAll>Show all</ShowAll>
            <Cross color="#777" size={10} width={1.6} />
          </DownloadBar>
        </Browser>
      </Body>
    </Desktop>
  );
}
